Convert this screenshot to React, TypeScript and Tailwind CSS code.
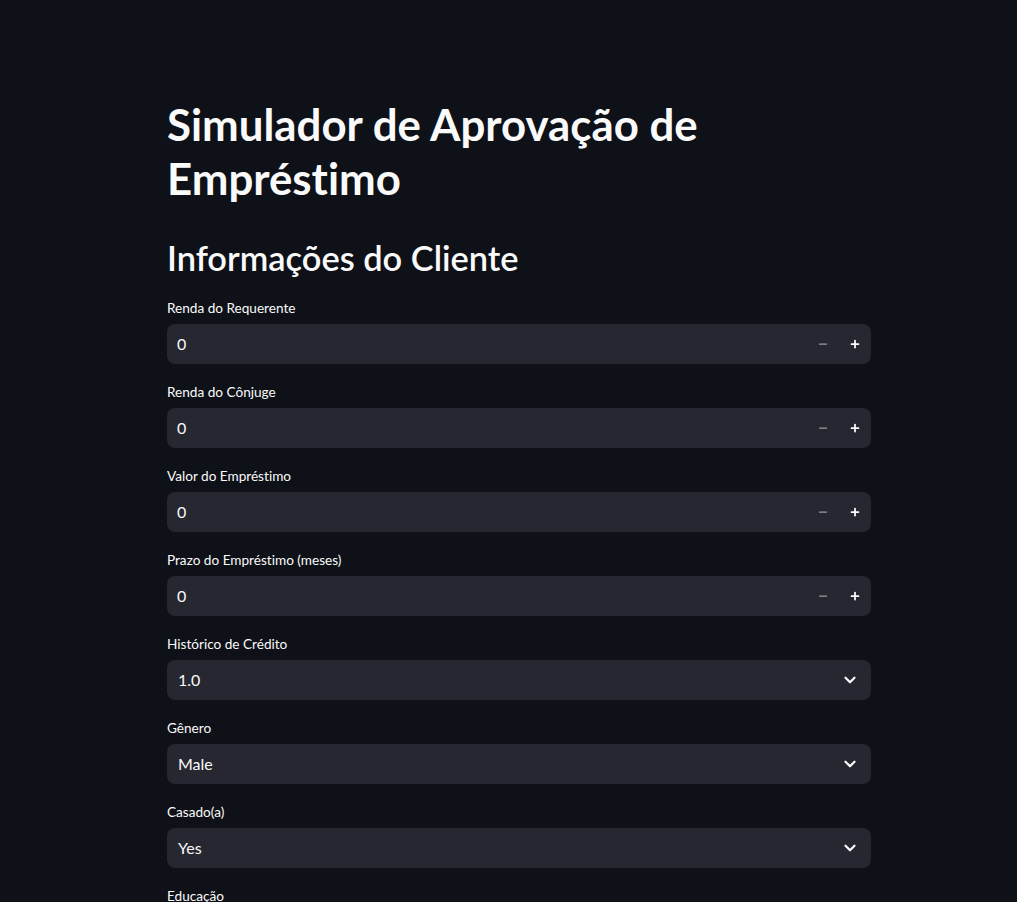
import { Minus, Plus, ChevronDown } from "lucide-react";

const numberFields = [
  "Renda do Requerente",
  "Renda do Cônjuge",
  "Valor do Empréstimo",
  "Prazo do Empréstimo (meses)",
];

const selectFields = [
  { label: "Histórico de Crédito", value: "1.0" },
  { label: "Gênero", value: "Male" },
  { label: "Casado(a)", value: "Yes" },
  { label: "Educação", value: "Graduate" },
];

const FieldLabel = ({ text }: { text: string }) => (
  <div className="h-[20px] mb-[6px] flex items-center text-[13.6px] text-[#fafafa]">{text}</div>
);

const NumberField = ({ label }: { label: string }) => (
  <div className="mb-[18px]">
    <FieldLabel text={label} />
    <div className="h-[40px] rounded-[8px] bg-[#262730] flex items-center">
      <div className="flex-1 pl-[10px] text-[16px] text-[#fafafa]">0</div>
      <div className="w-[32px] h-full flex items-center justify-center text-[#9b9ca0]">
        <Minus size={12} strokeWidth={2.5} />
      </div>
      <div className="w-[32px] h-full flex items-center justify-center text-[#ffffff]">
        <Plus size={12} strokeWidth={3.5} />
      </div>
    </div>
  </div>
);

const SelectField = ({ label, value }: { label: string; value: string }) => (
  <div className="mb-[18px]">
    <FieldLabel text={label} />
    <div className="h-[40px] rounded-[8px] bg-[#262730] flex items-center">
      <div className="flex-1 pl-[11px] text-[16px] text-[#fafafa]">{value}</div>
      <div className="w-[42px] flex items-center justify-center text-[#fafafa]">
        <ChevronDown size={18} strokeWidth={3} />
      </div>
    </div>
  </div>
);

export default function App() {
  return (
    <div className="h-[902px] overflow-hidden bg-[#0e1117] font-['Lato',sans-serif] [font-variant-ligatures:none]">
      <div className="w-[704px] ml-[167px] pt-[97px]">
        <h1 className="text-[43.8px] leading-[54px] font-bold text-[#fafafa]">
          Simulador de Aprovação de Empréstimo
        </h1>
        <h2 className="mt-[31px] mb-[19px] text-[34.4px] leading-[43px] font-semibold text-[#fafafa]">
          Informações do Cliente
        </h2>
        {numberFields.map((f) => (
          <NumberField key={f} label={f} />
        ))}
        {selectFields.map((f) => (
          <SelectField key={f.label} label={f.label} value={f.value} />
        ))}
      </div>
    </div>
  );
}
